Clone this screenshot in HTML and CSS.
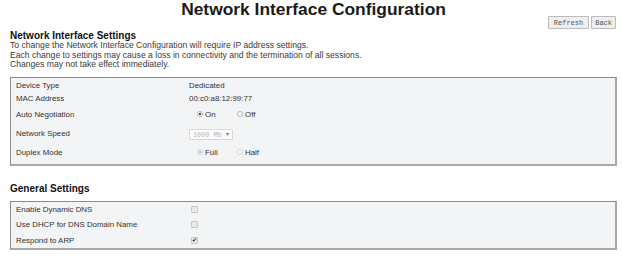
FILE: index.html
```html
<!doctype html>
<html lang="en">
  <head>
    <meta charset="UTF-8" />
    <title>Network Interface Configuration</title>
    <link rel="stylesheet" href="styles.css">
  </head>
  <body>
    <h1 class="page-title">Network Interface Configuration</h1>
    <div class="toolbar">
      <button class="btn btn-refresh" type="button">Refresh</button>
      <button class="btn btn-back" type="button">Back</button>
    </div>

    <h2 class="section-title first">Network Interface Settings</h2>
    <p class="intro">
      To change the Network Interface Configuration will require IP address settings.<br />
      Each change to settings may cause a loss in connectivity and the termination of all sessions.<br />
      Changes may not take effect immediately.
    </p>
    <div class="panel">
      <div class="row h13">
        <span class="label">Device Type</span>
        <span class="value">Dedicated</span>
      </div>
      <div class="row h13">
        <span class="label">MAC Address</span>
        <span class="value">00:c0:a8:12:99:77</span>
      </div>
      <div class="row h19">
        <span class="label">Auto Negotiation</span>
        <span class="value options">
          <label class="opt"><input type="radio" name="auto" checked />On</label>
          <label class="opt"><input type="radio" name="auto" />Off</label>
        </span>
      </div>
      <div class="row h19">
        <span class="label">Network Speed</span>
        <span class="value">
          <span class="select-wrap">
            <select class="select" disabled>
              <option>1000 Mb</option>
            </select>
          </span>
        </span>
      </div>
      <div class="row h19">
        <span class="label">Duplex Mode</span>
        <span class="value options">
          <label class="opt"><input type="radio" name="duplex" checked disabled />Full</label>
          <label class="opt"><input type="radio" name="duplex" disabled />Half</label>
        </span>
      </div>
    </div>

    <h2 class="section-title second">General Settings</h2>
    <div class="panel panel-general">
      <div class="row h15">
        <span class="label">Enable Dynamic DNS</span>
        <span class="value"><input class="check" type="checkbox" /></span>
      </div>
      <div class="row h16">
        <span class="label">Use DHCP for DNS Domain Name</span>
        <span class="value"><input class="check" type="checkbox" /></span>
      </div>
      <div class="row h15">
        <span class="label">Respond to ARP</span>
        <span class="value"><input class="check" type="checkbox" checked /></span>
      </div>
    </div>
  </body>
</html>
```
FILE: styles.css
```css
* {
  margin: 0;
  padding: 0;
  box-sizing: border-box;
}
body {
  background-color: #fff;
  color: #333;
  font-family: "Liberation Sans", Arial, sans-serif;
  font-size: 8.6px;
  padding: 0 5px 0 10px;
}
.page-title {
  font-size: 17.4px;
  line-height: 19px;
  height: 19px;
  margin-bottom: -3px;
  text-align: center;
  color: #1a1a1a;
  font-weight: bold;
}
.toolbar {
  display: flex;
  justify-content: flex-end;
  gap: 2px;
  padding-right: 1px;
  height: 13px;
}
.btn {
  font-family: "Liberation Mono", "Courier New", monospace;
  font-size: 7px;
  height: 13px;
  color: #555;
  background-color: #efefef;
  border: 1px solid #bbb;
  border-radius: 1px;
}
.btn-refresh {
  padding: 0 5px;
}
.btn-back {
  padding: 0 3px;
}
.section-title {
  font-size: 10px;
  line-height: 11px;
  color: #111;
  font-weight: bold;
}
.section-title.first {
  margin-top: 1px;
}
.section-title.second {
  margin-top: 17px;
}
.intro {
  line-height: 9.6px;
  color: #3a3a3a;
}
.panel {
  margin-top: 7px;
  padding: 1px 0 2px 5px;
  font-size: 7.9px;
  background-color: #f3f4f6;
  border: 2px solid #a8a8a8;
  border-top-color: #8c8c8c;
  border-left-color: #8c8c8c;
  border-top-width: 1px;
  border-left-width: 1px;
}
.panel-general {
  margin-top: 7px;
  padding: 0 0 0 5px;
}
.row {
  display: grid;
  grid-template-columns: 173px 1fr;
  align-items: center;
}
.h13 { height: 13px; }
.h15 { height: 15px; }
.h16 { height: 16px; }
.h19 { height: 19px; }
.value {
  display: flex;
  align-items: center;
}
.options {
  padding-left: 8px;
}
.opt {
  display: flex;
  align-items: center;
  gap: 2px;
  width: 40px;
}
.opt input {
  appearance: none;
  width: 6px;
  height: 6px;
  border: 1px solid #b8b8b8;
  border-radius: 50%;
  background-color: #fafafa;
}
.opt input:checked {
  background: radial-gradient(circle, #555 0 1.3px, #fafafa 1.6px);
}
.opt input:disabled {
  border-color: #d4d4d4;
}
.opt input:disabled:checked {
  background: radial-gradient(circle, #bbb 0 1.3px, #fafafa 1.6px);
}
.select-wrap {
  position: relative;
  display: inline-block;
  margin-top: 3px;
}
.select {
  appearance: none;
  width: 44px;
  height: 11px;
  padding-left: 3px;
  font-family: "Liberation Mono", "Courier New", monospace;
  font-size: 6.8px;
  color: #999;
  background-color: #fff;
  border: 1px solid #ccc;
  border-radius: 1px;
}
.select-wrap::after {
  content: "\25BE";
  position: absolute;
  right: 4px;
  top: 1px;
  font-size: 6px;
  color: #777;
}
.check {
  appearance: none;
  position: relative;
  width: 7px;
  height: 7px;
  margin-left: 2px;
  border: 1px solid #c8c8c8;
  border-radius: 1px;
  background-color: #e9e9e9;
}
.check:checked::after {
  content: "\2714";
  position: absolute;
  left: 0;
  top: -2px;
  font-size: 6px;
  color: #222;
}
```
